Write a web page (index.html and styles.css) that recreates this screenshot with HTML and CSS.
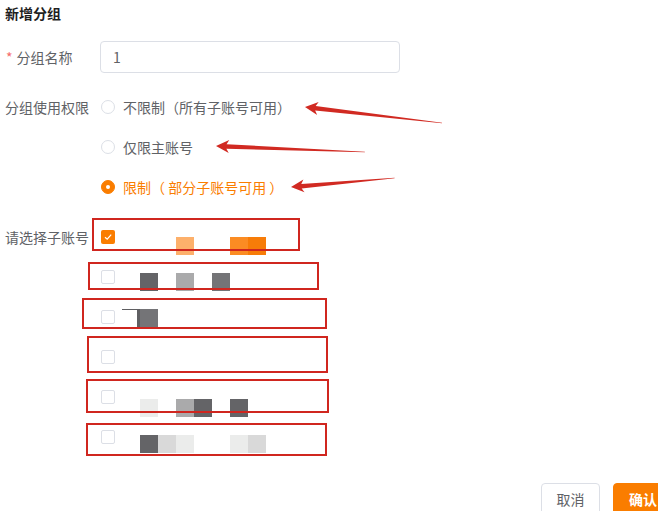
FILE: index.html
```html
<!DOCTYPE html>
<html lang="zh-CN">
<head>
<meta charset="utf-8">
<title>新增分组</title>
<link rel="stylesheet" href="styles.css">
</head>
<body>
<div class="dialog">
  <div class="title">新增分组</div>
  <div class="form">
    <div class="item item-name">
      <label class="label"><span class="req">*</span>分组名称</label>
      <div class="input">1</div>
    </div>
    <div class="item item-radio">
      <div class="label">分组使用权限</div>
      <div class="content">
        <div class="radio-row"><span class="radio"></span><span class="rtext">不限制（所有子账号可用）</span></div>
        <div class="radio-row"><span class="radio"></span><span class="rtext">仅限主账号</span></div>
        <div class="radio-row active"><span class="radio on"></span><span class="rtext">限制（ 部分子账号可用 ）</span></div>
      </div>
    </div>
    <div class="item item-cb">
      <div class="label">请选择子账号</div>
      <div class="content">
        <div class="cb-row">
          <span class="cb on"><svg viewBox="0 0 14 14" width="14" height="14"><path d="M4 7.2 L6.2 9.2 L10.2 4.6" fill="none" stroke="#fff" stroke-width="1.2"/></svg></span>
          <div class="mosaic m1"><i></i><i></i><i class="c-lo"></i><i></i><i></i><i class="c-o1"></i><i class="c-o2"></i></div>
        </div>
        <div class="cb-row">
          <span class="cb"></span>
          <div class="mosaic m2"><i class="c-d"></i><i></i><i class="c-m"></i><i></i><i class="c-g"></i></div>
        </div>
        <div class="cb-row">
          <span class="cb"></span>
          <div class="m3"><span class="dash"></span><span class="strip"></span><span class="cell c-g"></span></div>
        </div>
        <div class="cb-row">
          <span class="cb"></span>
        </div>
        <div class="cb-row">
          <span class="cb"></span>
          <div class="mosaic m5"><i class="c-xl"></i><i></i><i class="c-m"></i><i class="c-d"></i><i></i><i class="c-d"></i></div>
        </div>
        <div class="cb-row">
          <span class="cb"></span>
          <div class="mosaic m6"><i class="c-d"></i><i class="c-l"></i><i class="c-xl"></i><i></i><i></i><i class="c-xl"></i><i class="c-l"></i></div>
        </div>
      </div>
    </div>
  </div>
  <div class="footer">
    <button class="btn">取消</button>
    <button class="btn primary">确认</button>
  </div>
</div>
<svg class="annot" width="658" height="519" viewBox="0 0 658 519">
  <g fill="none" stroke="#d0261f" stroke-width="2">
    <rect x="93" y="219" width="206" height="31"/>
    <rect x="89" y="263" width="229" height="26"/>
    <rect x="83" y="299" width="243" height="29"/>
    <rect x="88" y="337" width="239" height="35"/>
    <rect x="87" y="380" width="241" height="32"/>
    <rect x="87" y="424" width="239" height="31"/>
  </g>
  <g fill="#d12a22">
    <path transform="translate(305 107) rotate(6.66)" d="M0 0 L13 -6.5 L10.5 -2.2 L138 -0.3 L138 0.3 L10.5 2.4 L13 6.5 Z"/>
    <path transform="translate(216 146) rotate(2.3)" d="M0 0 L13 -6.5 L10.5 -2.2 L149 -0.3 L149 0.3 L10.5 2.4 L13 6.5 Z"/>
    <path transform="translate(291 187) rotate(-4.95)" d="M0 0 L13 -6.5 L10.5 -2.2 L104 -0.3 L104 0.3 L10.5 2.4 L13 6.5 Z"/>
  </g>
</svg>
</body>
</html>
```
FILE: styles.css
```css
html, body {
  margin: 0;
  padding: 0;
  background: #fff;
  overflow: hidden;
}
body {
  width: 658px;
  height: 519px;
  position: relative;
  font-family: "Noto Sans CJK SC", "Noto Sans", sans-serif;
  font-size: 14px;
  color: #606266;
}
.dialog {
  padding: 3px 0 0 5px;
}
.title {
  height: 20px;
  line-height: 20px;
  font-size: 14px;
  font-weight: bold;
  color: #1f1f1f;
}
.form {
  margin-top: 18px;
}
.item {
  display: flex;
  align-items: flex-start;
}
.label {
  width: 95px;
  flex: none;
  line-height: 40px;
  white-space: nowrap;
}
.item-name {
  align-items: center;
  height: 32px;
}
.item-name .label {
  line-height: 32px;
}
.req {
  color: #f56c6c;
  margin: 0 4px 0 1px;
}
.input {
  box-sizing: border-box;
  width: 300px;
  height: 32px;
  border: 1px solid #dcdfe6;
  border-radius: 4px;
  padding-left: 12px;
  line-height: 30px;
  color: #606266;
}
.item-radio {
  margin-top: 14px;
}
.radio-row {
  height: 40px;
  display: flex;
  align-items: center;
  padding-left: 1px;
}
.radio {
  box-sizing: border-box;
  width: 14px;
  height: 14px;
  border: 1px solid #dcdfe6;
  border-radius: 50%;
  margin-right: 8px;
  flex: none;
  position: relative;
}
.radio.on {
  background: #fa7d00;
  border-color: #fa7d00;
}
.radio.on::after {
  content: "";
  position: absolute;
  left: 4px;
  top: 4px;
  width: 4px;
  height: 4px;
  border-radius: 50%;
  background: #fff;
}
.radio-row.active .rtext {
  color: #fa7d00;
}
.item-cb {
  margin-top: 10px;
}
.cb-row {
  height: 40px;
  display: flex;
  align-items: flex-start;
  padding-left: 1px;
}
.cb {
  box-sizing: border-box;
  width: 14px;
  height: 14px;
  margin-top: 13px;
  border: 1px solid #dcdfe6;
  border-radius: 2px;
  flex: none;
}
.cb.on {
  background: #fa7d00;
  border-color: #fa7d00;
  border: none;
}
.cb svg {
  display: block;
}
.mosaic {
  margin-left: 25px;
  display: grid;
  grid-template-columns: repeat(7, 18px);
  grid-auto-rows: 18px;
}
.mosaic i {
  display: block;
}
.m1 { margin-top: 20px; }
.m2 { margin-top: 16px; }
.m5 { margin-top: 22px; }
.m6 { margin-top: 18px; }
.m3 {
  margin-top: 12px;
  margin-left: 7px;
  display: flex;
  align-items: flex-start;
}
.m3 .dash {
  width: 15px;
  height: 1px;
  background: #5f5f62;
}
.m3 .strip {
  width: 3px;
  height: 18px;
  background: #5f5f62;
}
.m3 .cell {
  width: 18px;
  height: 18px;
}
.c-lo { background: #fdb06b; }
.c-o1 { background: #fb8c23; }
.c-o2 { background: #f77c08; }
.c-d { background: #646467; }
.c-m { background: #aaaaab; }
.c-g { background: #747477; }
.c-l { background: #d9d9d9; }
.c-xl { background: #ebeceb; }
.footer {
  margin-top: 26px;
  height: 28px;
  overflow: hidden;
  padding-left: 536px;
  display: flex;
  gap: 13px;
  align-items: flex-start;
}
.btn {
  flex: none;
  box-sizing: border-box;
  height: 32px;
  width: 59px;
  border: 1px solid #dcdfe6;
  border-radius: 4px;
  background: #fff;
  color: #606266;
  font-family: "Noto Sans CJK SC", "Noto Sans", sans-serif;
  font-size: 14px;
  padding: 0;
  line-height: 28px;
}
.btn.primary {
  width: 70px;
  background: #fa7d00;
  border-color: #fa7d00;
  color: #fff;
  font-weight: bold;
  text-align: left;
  padding-left: 15px;
}
.annot {
  position: absolute;
  left: 0;
  top: 0;
  pointer-events: none;
}
```
